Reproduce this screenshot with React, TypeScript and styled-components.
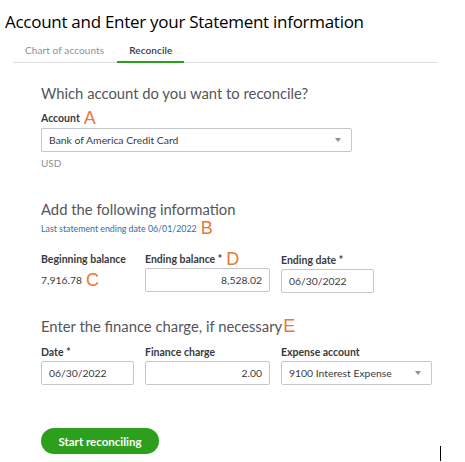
import React from "react";
import styled, { createGlobalStyle } from "styled-components";

const GlobalStyle = createGlobalStyle`
  html, body {
    margin: 0;
    padding: 0;
    background: #ffffff;
  }
  body {
    width: 465px;
    height: 462px;
    overflow: hidden;
    font-family: "Lato", "Noto Sans", sans-serif;
    color: #393a3d;
    position: relative;
  }
`;

const Page = styled.div`
  position: relative;
  width: 465px;
  height: 462px;
`;

const Title = styled.h1`
  margin: 0;
  padding: 10px 0 0 5px;
  height: 27px;
  font-family: "Open Sans", "Liberation Sans", sans-serif;
  font-weight: 400;
  font-size: 17px;
  line-height: 24px;
  color: #000;
  letter-spacing: -0.28px;
  white-space: nowrap;
`;

const TabBar = styled.div`
  display: flex;
  margin: 0 0 0 13px;
  width: 425px;
  height: 26px;
  border-bottom: 1px solid #dcdee2;
  box-sizing: border-box;
  padding-left: 12px;
  gap: 25px;
`;

const Tab = styled.div<{ $active?: boolean }>`
  position: relative;
  font-size: 10px;
  line-height: 26px;
  height: 25px;
  color: ${(p) => (p.$active ? "#393a3d" : "#8d9096")};
  font-weight: ${(p) => (p.$active ? 600 : 400)};
  letter-spacing: 0.1px;
  &::after {
    content: "";
    display: ${(p) => (p.$active ? "block" : "none")};
    position: absolute;
    left: -12px;
    right: -12px;
    bottom: -1px;
    height: 2px;
    background: #2ca01c;
  }
`;

const Content = styled.div`
  padding-left: 41px;
`;

const Heading = styled.h2<{ $top: number }>`
  margin: ${(p) => p.$top}px 0 0 0;
  font-size: 14.8px;
  font-weight: 400;
  line-height: 20px;
  color: #55565a;
  white-space: nowrap;
  display: flex;
  align-items: center;
`;

const Marker = styled.span`
  color: #e8773a;
  font-family: "Liberation Sans", sans-serif;
  font-size: 18px;
  font-weight: 400;
  line-height: 14px;
  margin-left: 4px;
`;

const Label = styled.div<{ $top?: number }>`
  margin-top: ${(p) => p.$top || 0}px;
  font-size: 10.5px;
  font-weight: 700;
  line-height: 14px;
  color: #393a3d;
  white-space: nowrap;
  display: flex;
  align-items: center;
  height: 16px;
`;

const SelectBox = styled.div<{ $w: number; $top?: number }>`
  width: ${(p) => p.$w}px;
  height: 24px;
  margin-top: ${(p) => p.$top || 0}px;
  box-sizing: border-box;
  border: 1px solid #c4c7cc;
  border-radius: 2px;
  display: flex;
  align-items: center;
  justify-content: space-between;
  padding: 0 8px 0 7px;
  font-size: 10.4px;
  color: #393a3d;
  background: #fff;
`;

const Caret = styled.span`
  width: 0;
  height: 0;
  border-left: 3.5px solid transparent;
  border-right: 3.5px solid transparent;
  border-top: 4px solid #8d9096;
  margin-right: 2px;
`;

const Input = styled.div<{ $w: number; $right?: boolean }>`
  width: ${(p) => p.$w}px;
  height: 24px;
  box-sizing: border-box;
  border: 1px solid #c4c7cc;
  border-radius: 2px;
  display: flex;
  align-items: center;
  justify-content: ${(p) => (p.$right ? "flex-end" : "flex-start")};
  padding: 0 7px;
  font-size: 10.4px;
  color: #393a3d;
  background: #fff;
`;

const Muted = styled.div`
  font-size: 10px;
  line-height: 14px;
  color: #8d9096;
  margin-top: 4px;
`;

const LinkText = styled.div`
  display: flex;
  align-items: center;
  font-size: 8.8px;
  color: #2f6ea5;
  height: 14px;
  margin-top: 2px;
`;

const Row = styled.div<{ $top: number }>`
  display: flex;
  gap: 11px;
  margin-top: ${(p) => p.$top}px;
`;

const Field = styled.div<{ $w: number; $shift?: number }>`
  width: ${(p) => p.$w}px;
  display: flex;
  flex-direction: column;
  gap: 1px;
  padding-top: ${(p) => p.$shift || 0}px;
`;

const Value = styled.div`
  display: flex;
  align-items: center;
  height: 24px;
  font-size: 10.4px;
  color: #393a3d;
`;

const Button = styled.button`
  margin-top: 43px;
  width: 118px;
  height: 26px;
  border: none;
  border-radius: 13px;
  background: #2ca01c;
  color: #fff;
  font-family: "Lato", sans-serif;
  font-weight: 700;
  font-size: 11.5px;
  padding: 0;
  cursor: pointer;
`;

const Cursor = styled.div`
  position: absolute;
  left: 440px;
  top: 446px;
  width: 1px;
  height: 15px;
  background: #000;
`;

export default function App() {
  return (
    <Page>
      <GlobalStyle />
      <Title>Account and Enter your Statement information</Title>
      <TabBar>
        <Tab>Chart of accounts</Tab>
        <Tab $active>Reconcile</Tab>
      </TabBar>
      <Content>
        <Heading $top={20}>Which account do you want to reconcile?</Heading>
        <Label $top={7}>
          Account <Marker>A</Marker>
        </Label>
        <SelectBox $w={311} $top={2}>
          Bank of America Credit Card
          <Caret />
        </SelectBox>
        <Muted>USD</Muted>

        <Heading $top={29}>Add the following information</Heading>
        <LinkText>
          Last statement ending date 06/01/2022 <Marker>B</Marker>
        </LinkText>

        <Row $top={16}>
          <Field $w={93}>
            <Label>Beginning balance</Label>
            <Value>
              7,916.78 <Marker>C</Marker>
            </Value>
          </Field>
          <Field $w={125}>
            <Label>
              Ending balance * <Marker>D</Marker>
            </Label>
            <Input $w={125} $right>
              8,528.02
            </Input>
          </Field>
          <Field $w={93} $shift={1}>
            <Label>Ending date *</Label>
            <Input $w={93}>06/30/2022</Input>
          </Field>
        </Row>

        <Heading $top={23}>
          Enter the finance charge, if necessary
          <Marker style={{ marginLeft: 1 }}>E</Marker>
        </Heading>

        <Row $top={8}>
          <Field $w={93}>
            <Label>Date *</Label>
            <Input $w={93}>06/30/2022</Input>
          </Field>
          <Field $w={125}>
            <Label>Finance charge</Label>
            <Input $w={125} $right>
              2.00
            </Input>
          </Field>
          <Field $w={151}>
            <Label>Expense account</Label>
            <SelectBox $w={151}>
              9100 Interest Expense
              <Caret />
            </SelectBox>
          </Field>
        </Row>

        <Button>Start reconciling</Button>
      </Content>
      <Cursor />
    </Page>
  );
}
